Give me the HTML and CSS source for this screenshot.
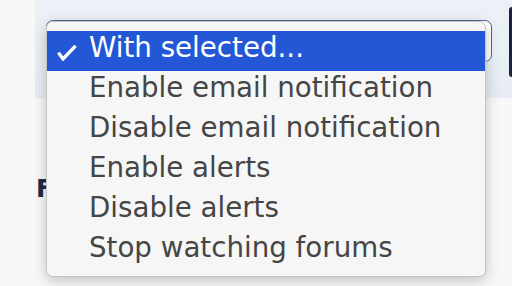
FILE: index.html
```html
<!DOCTYPE html>
<html lang="en">
<head>
<meta charset="utf-8">
<title>With selected</title>
<link rel="stylesheet" href="styles.css">
</head>
<body>
<div class="page">
  <div class="toolbar">
    <div class="select"></div>
    <div class="go-btn"></div>
  </div>
  <h2 class="heading">Forums</h2>
</div>
<ul class="menu">
  <li class="item selected">
    <span class="check">
      <svg width="20" height="16" viewBox="0 0 20 16"><path d="M1.4 7.6 L6 14 L18.6 0.8" fill="none" stroke="#ffffff" stroke-width="3.3" stroke-linecap="butt" stroke-linejoin="miter"/></svg>
    </span>
    <span class="label">With selected...</span>
  </li>
  <li class="item"><span class="check"></span><span class="label">Enable email notification</span></li>
  <li class="item"><span class="check"></span><span class="label">Disable email notification</span></li>
  <li class="item"><span class="check"></span><span class="label">Enable alerts</span></li>
  <li class="item"><span class="check"></span><span class="label">Disable alerts</span></li>
  <li class="item"><span class="check"></span><span class="label">Stop watching forums</span></li>
</ul>
</body>
</html>
```

FILE: styles.css
```css
html, body {
  margin: 0;
  padding: 0;
  width: 512px;
  height: 286px;
  overflow: hidden;
  background: #f8f8f8;
  font-family: "DejaVu Sans", Verdana, sans-serif;
}

.page {
  padding-left: 35px;
}

.toolbar {
  height: 98px;
  background: linear-gradient(#edf1f7, #e7ecf4);
  display: flex;
  align-items: flex-start;
  padding-left: 11px;
  box-sizing: border-box;
  overflow: hidden;
}

.select {
  margin-top: 20px;
  width: 446px;
  height: 42px;
  box-sizing: border-box;
  border: 1.5px solid #4d6690;
  border-radius: 7px;
  background: #ffffff;
  flex-shrink: 0;
}

.go-btn {
  margin-top: 7px;
  margin-left: 17px;
  width: 3px;
  height: 70px;
  border-radius: 6px 0 0 6px;
  background: #16243f;
  flex-shrink: 0;
}

.heading {
  margin: 76px 0 0 1px;
  font-size: 25px;
  line-height: 30px;
  font-weight: bold;
  color: #1b2a4b;
}

.menu {
  position: absolute;
  left: 46px;
  top: 21px;
  width: 440px;
  height: 256px;
  box-sizing: border-box;
  margin: 0;
  padding: 8.5px 0 0 0;
  list-style: none;
  background: #f6f6f6;
  border: 1px solid #c6c6c6;
  border-radius: 7px;
  box-shadow: 0 4px 14px rgba(0, 0, 0, 0.22);
  overflow: hidden;
}

.item {
  display: flex;
  align-items: flex-start;
  height: 40px;
  box-sizing: border-box;
  font-size: 27.7px;
  line-height: 34px;
  color: #454545;
}

.item.selected {
  background: #2457d5;
  color: #ffffff;
}

.check {
  width: 42px;
  flex-shrink: 0;
  display: flex;
  padding: 14px 0 0 10px;
  box-sizing: border-box;
}

.label {
  white-space: nowrap;
}
```
